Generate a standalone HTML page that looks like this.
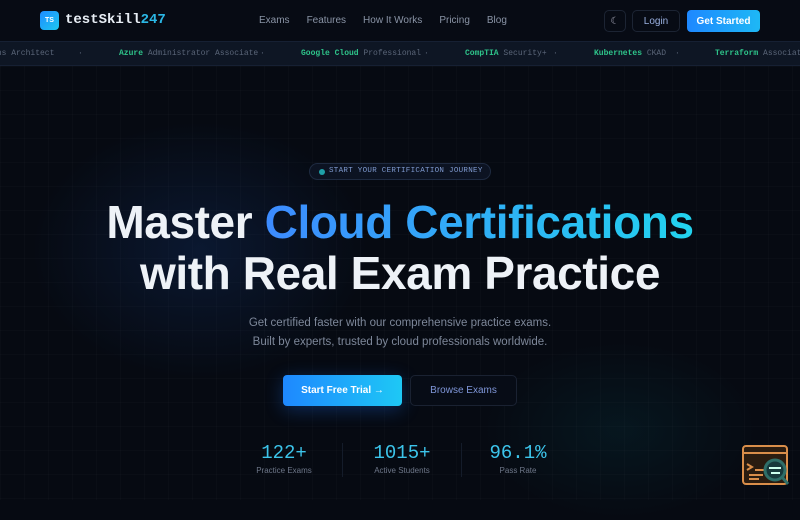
<!DOCTYPE html>
<html><head><style>
*{margin:0;padding:0;box-sizing:border-box}
body{width:800px;height:500px;overflow:hidden;background:#060a12;font-family:"Liberation Sans",sans-serif;position:relative;color:#e6edf5}
.grid{position:absolute;inset:66px 0 0 0;background-image:linear-gradient(rgba(255,255,255,.015) 1px,transparent 1px),linear-gradient(90deg,rgba(255,255,255,.015) 1px,transparent 1px);background-size:24px 24px}
.glow1{position:absolute;left:30px;top:120px;width:340px;height:260px;background:radial-gradient(ellipse,rgba(30,80,170,.2),transparent 70%)}
.glow2{position:absolute;left:480px;top:340px;width:280px;height:180px;background:radial-gradient(ellipse,rgba(10,80,90,.18),transparent 70%)}
.nav{position:absolute;top:0;left:0;right:0;height:41px;background:#070b14}
.c{display:flex;align-items:center;justify-content:center}
.logo{position:absolute;left:40px;top:11px;width:19px;height:19px;border-radius:4px;background:linear-gradient(135deg,#1e8cff,#1ec8f0);font-size:7px;font-weight:bold;color:#fff}
.brand{position:absolute;left:65px;top:12px;font-family:"Liberation Mono",monospace;font-size:14px;color:#e8eef5;font-weight:bold}
.brand span{color:#2bb8e6}
.links{position:absolute;top:15px;left:259px;font-size:10px;color:#8a94a6}
.links span{margin-right:17px}
.moon{position:absolute;left:604px;top:10px;width:22px;height:22px;border:1px solid #1c2433;border-radius:5px;color:#aab;font-size:10px}
.login{position:absolute;left:632px;top:10px;width:48px;height:22px;border:1px solid #1c2433;border-radius:5px;font-size:10px;color:#9ab0e0}
.gs{position:absolute;left:687px;top:10px;width:73px;height:22px;border-radius:4px;background:linear-gradient(90deg,#1e88ff,#1eb8f5);font-size:10px;font-weight:bold;color:#fff}
.ticker{position:absolute;top:41px;left:0;right:0;height:25px;background:#0e1624;border-top:1px solid #162033;border-bottom:1px solid #162033;font-family:"Liberation Mono",monospace;font-size:8px;white-space:nowrap;line-height:23px;color:#5a6578}
.ticker b{color:#2ec48a}
.t{position:absolute;top:0}
.pill{position:absolute;left:309px;top:163px;width:182px;height:17px;border:1px solid #1e2a40;border-radius:9px;background:#0c1322;font-family:"Liberation Mono",monospace;font-size:7.5px;color:#7f9ad0;line-height:15px;padding-left:19px;letter-spacing:.3px}
.pill:before{content:"";position:absolute;left:9px;top:5px;width:6px;height:6px;border-radius:50%;background:#1fa0a8}
h1{position:absolute;top:197px;left:0;width:800px;text-align:center;font-size:46px;line-height:51px;font-weight:bold;color:#eef2f7;letter-spacing:-.4px}
h1 span{background:linear-gradient(90deg,#3d8bff,#22d3ee);-webkit-background-clip:text;color:transparent}
.sub{position:absolute;top:314px;width:800px;text-align:center;font-size:11.5px;line-height:19px;color:#7d8799}
.b1{position:absolute;left:283px;top:375px;width:119px;height:31px;border-radius:4px;background:linear-gradient(90deg,#1e88ff,#1ec8f5);font-size:10px;font-weight:bold;color:#fff;box-shadow:0 4px 18px rgba(30,120,255,.3)}
.b2{position:absolute;left:410px;top:375px;width:107px;height:31px;border-radius:5px;border:1px solid #1a2232;font-size:10px;color:#7f96d8;background:#070c16}
.st{position:absolute;top:441px;text-align:center;width:100px}
.st .n{font-family:"Liberation Mono",monospace;font-size:19px;color:#3cc4ea;line-height:24px}
.st .l{font-size:8px;color:#6e7789;margin-top:1px}
.div{position:absolute;top:443px;width:1px;height:34px;background:#141c2a}
</style></head><body>
<div class="grid"></div><div class="glow1"></div><div class="glow2"></div>
<div class="nav">
<div class="logo c">TS</div><div class="brand">testSkill<span>247</span></div>
<div class="links"><span>Exams</span><span>Features</span><span>How It Works</span><span>Pricing</span><span>Blog</span></div>
<div class="moon c">☾</div><div class="login c">Login</div><div class="gs c">Get Started</div>
</div>
<div class="ticker">
<span class="t" style="left:-8px">ons Architect</span><span class="t" style="left:78px">·</span>
<span class="t" style="left:119px"><b>Azure</b> Administrator Associate</span><span class="t" style="left:260px">·</span>
<span class="t" style="left:301px"><b>Google Cloud</b> Professional</span><span class="t" style="left:424px">·</span>
<span class="t" style="left:465px"><b>CompTIA</b> Security+</span><span class="t" style="left:553px">·</span>
<span class="t" style="left:594px"><b>Kubernetes</b> CKAD</span><span class="t" style="left:675px">·</span>
<span class="t" style="left:715px"><b>Terraform</b> Associate</span>
</div>
<div class="pill">START YOUR CERTIFICATION JOURNEY</div>
<h1>Master <span>Cloud Certifications</span><br>with Real Exam Practice</h1>
<div class="sub">Get certified faster with our comprehensive practice exams.<br>Built by experts, trusted by cloud professionals worldwide.</div>
<div class="b1 c">Start Free Trial →</div><div class="b2 c">Browse Exams</div>
<div class="st" style="left:234px"><div class="n">122+</div><div class="l">Practice Exams</div></div>
<div class="div" style="left:342px"></div>
<div class="st" style="left:352px"><div class="n">1015+</div><div class="l">Active Students</div></div>
<div class="div" style="left:461px"></div>
<div class="st" style="left:468px"><div class="n">96.1%</div><div class="l">Pass Rate</div></div>
<svg style="position:absolute;left:741px;top:444px" width="50" height="44" viewBox="0 0 50 44">
<rect x="2" y="2" width="44" height="38" rx="3" fill="#2a1c10" stroke="#d98e4a" stroke-width="2"/>
<line x1="2" y1="9" x2="46" y2="9" stroke="#d98e4a" stroke-width="2"/>
<path d="M6 20l5 3-5 3M14 26h12M8 31h14M8 35h10" stroke="#d98e4a" stroke-width="2" fill="none"/>
<circle cx="34" cy="26" r="10" fill="#17393c" stroke="#2e6e68" stroke-width="3"/>
<path d="M28 24h12M30 29h9" stroke="#cfe" stroke-width="2"/>
<line x1="41" y1="33" x2="47" y2="40" stroke="#2e6e68" stroke-width="3"/>
</svg>
</body></html>
